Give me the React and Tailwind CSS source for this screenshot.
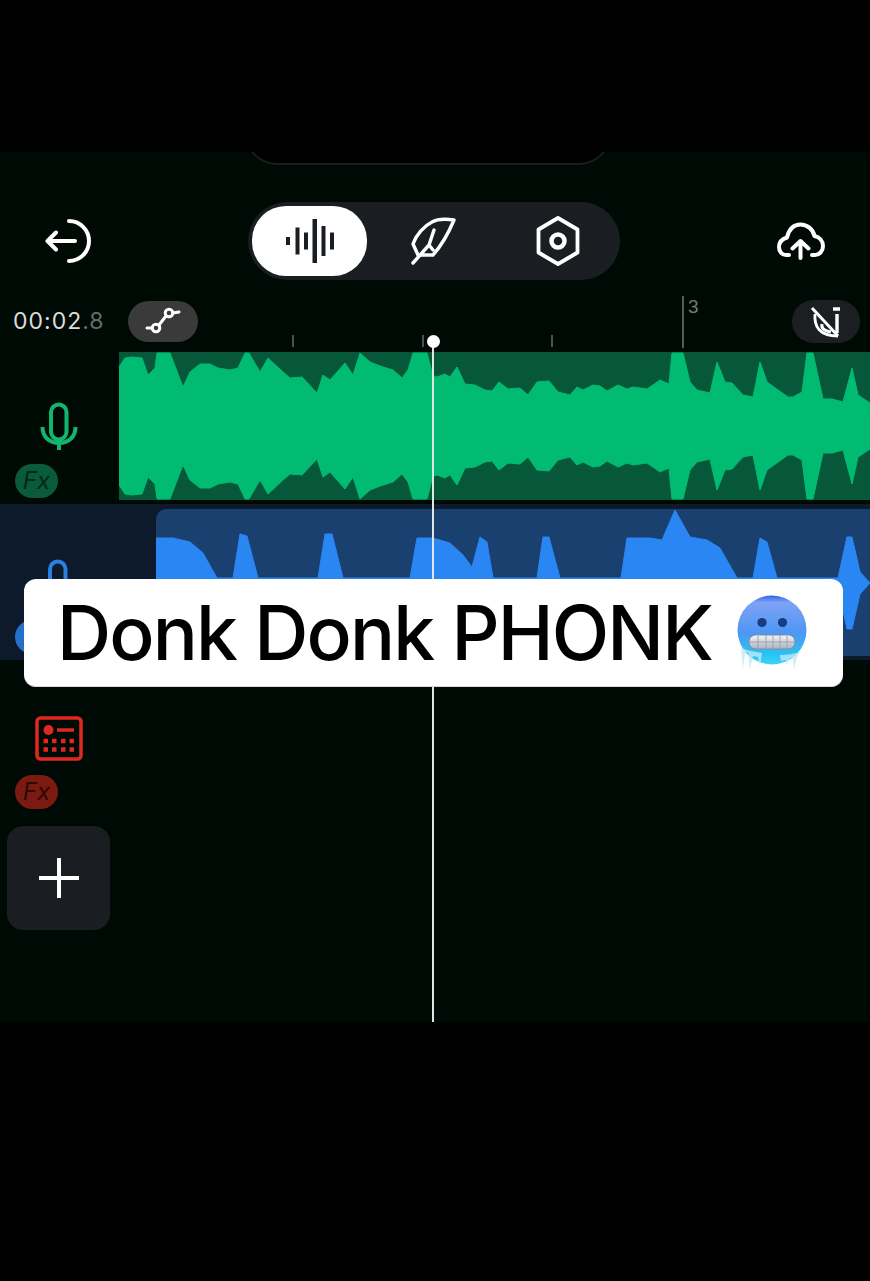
import React from "react";

// upper contour of each clip in page pixels; the lower half is the mirror image
const GREEN_TOP = [
  [119, 367], [125, 358], [132, 357], [142, 358], [148, 375], [155, 368], [157, 353], [170, 353], [183, 387],
  [190, 372], [200, 364], [210, 364], [218, 368], [230, 370], [238, 368], [245, 353], [249, 353], [260, 372],
  [268, 358], [283, 372], [290, 378], [302, 377], [317, 393], [323, 375], [330, 380], [345, 363], [353, 375],
  [360, 353], [370, 362], [380, 366], [393, 370], [402, 378], [408, 370], [413, 353], [427, 353], [433, 376],
  [437, 377], [445, 374], [450, 377], [457, 367], [465, 384], [475, 385], [485, 390], [492, 391], [499, 382],
  [508, 389], [520, 388], [528, 395], [537, 382], [549, 381], [558, 392], [570, 395], [577, 387], [583, 390],
  [593, 385], [600, 386], [607, 391], [618, 385], [627, 389], [633, 387], [647, 389], [660, 380], [669, 384],
  [672, 353], [683, 353], [690, 382], [697, 390], [710, 393], [717, 362], [725, 382], [732, 383], [743, 395],
  [753, 397], [760, 362], [767, 382], [788, 397], [793, 397], [802, 392], [807, 353], [813, 353], [823, 399],
  [832, 399], [843, 402], [852, 368], [858, 395], [870, 403],
];

const BLUE_TOP = [
  [156, 538], [173, 538], [190, 542], [203, 553], [217, 578], [233, 578], [240, 534], [247, 536], [258, 578],
  [318, 578], [325, 534], [332, 534], [343, 578], [410, 578], [417, 538], [433, 538], [450, 543], [463, 555],
  [472, 567], [480, 537], [487, 542], [493, 578], [537, 578], [543, 537], [549, 537], [560, 578], [621, 578],
  [627, 538], [650, 538], [662, 540], [675, 510], [690, 537], [707, 540], [720, 548], [737, 578], [753, 578],
  [760, 538], [767, 542], [777, 578], [838, 578], [847, 537], [852, 537], [860, 572], [870, 583],
];

function mirrored(top, centerY) {
  const upper = top.map(([x, y]) => `${x},${y}`);
  const lower = [...top].reverse().map(([x, y]) => `${x},${2 * centerY - y}`);
  return [...upper, ...lower].join(" ");
}

function Wave({ points, center, fill, x, y, w, h }) {
  return (
    <svg viewBox={`${x} ${y} ${w} ${h}`} className="block w-full h-full">
      <polygon points={mirrored(points, center)} fill={fill} strokeLinejoin="round" stroke={fill} strokeWidth="1" />
    </svg>
  );
}

function Mic({ color }) {
  return (
    <svg width="38" height="50" viewBox="0 0 38 50" fill="none" stroke={color} strokeWidth="4" className="block">
      <rect x="11" y="2.500" width="15.500" height="35" rx="7.750" />
      <path d="M2.500 25c0 10 7 16 16.500 16s16.500-6 16.500-16M19 41v7" />
    </svg>
  );
}

function FxBadge({ bg, color, className = "" }) {
  return (
    <div className={`w-[43px] h-[34px] rounded-[17px] flex items-center justify-center italic text-[24px] leading-none ${bg} ${color} ${className}`}>
      Fx
    </div>
  );
}

function FreezingFace() {
  return (
    <svg width="76" height="76" viewBox="0 0 76 76" className="block shrink-0">
      <defs>
        <linearGradient id="face" x1="0" y1="0" x2="0" y2="1">
          <stop offset="0" stopColor="#2f62ea" />
          <stop offset="0.1" stopColor="#7ea2f6" />
          <stop offset="0.55" stopColor="#4d97f3" />
          <stop offset="0.85" stopColor="#27c4f2" />
          <stop offset="1" stopColor="#3fd4f5" />
        </linearGradient>
        <linearGradient id="teeth" x1="0" y1="0" x2="0" y2="1">
          <stop offset="0" stopColor="#f4f5f7" />
          <stop offset="1" stopColor="#aab2bd" />
        </linearGradient>
      </defs>
      <circle cx="38" cy="35" r="34.500" fill="url(#face)" />
      <circle cx="28" cy="27.500" r="4.600" fill="#173c80" />
      <circle cx="48.500" cy="27.500" r="4.600" fill="#173c80" />
      <rect x="15" y="40" width="46" height="14" rx="6.500" fill="url(#teeth)" stroke="#7e8da3" strokeWidth="1" />
      <path d="M15 47h46M24 41v12M32 40v14M39 40v14M46 40v14M53 41v12" stroke="#9aa3b0" strokeWidth="1" fill="none" />
      <path d="M7 53l2 21 2-15 3-2 2 17 3-13 5 1 2 10 2-14c-8-1-15-3-21-5z" fill="#bfe8f7" opacity="0.8" />
      <path d="M46 60l1 6 5-1v6l4-8 3 1 1 10 3-12 3-5c-6 2-13 3-20 3z" fill="#bfe8f7" opacity="0.8" />
    </svg>
  );
}

export default function App() {
  return (
    <div className="relative w-[870px] h-[1281px] bg-black overflow-hidden font-['Inter',sans-serif]">
      <div className="h-[152px]" />

      <main className="relative h-[870px] bg-[#000a04] overflow-hidden">
        {/* notch edge */}
        <div className="absolute left-[245px] -top-[40px] w-[366px] h-[53px] bg-black border-x-2 border-b-2 border-[#1b1d1c] rounded-b-[32px]" />

        {/* top bar */}
        <header className="flex items-center h-[78px] translate-y-[50px]">
          <div className="w-[248px] pl-[45px]">
            <svg width="46" height="46" viewBox="0 0 46 46" fill="none" stroke="white" strokeWidth="4" strokeLinecap="round" strokeLinejoin="round" className="block">
              <path d="M24 3c11 0 20 9 20 20s-9 20-20 20M3 23h27M11 14.500L2.500 23l8.500 8.500" />
            </svg>
          </div>

          <nav className="w-[372px] h-[78px] rounded-[39px] bg-[#1a1d21] flex items-center pl-[4px]">
            <div className="w-[115px] h-[70px] shrink-0 rounded-[34px] bg-white flex items-center justify-center">
              <svg width="50" height="44" viewBox="0 0 50 44" className="block translate-x-[1px]" fill="#1a1d21">
                <rect x="0" y="18" width="4" height="8" />
                <rect x="9.500" y="8.500" width="4" height="27" />
                <rect x="18" y="13.500" width="4" height="17" />
                <rect x="26.500" y="0" width="4.500" height="44" />
                <rect x="35.500" y="7" width="4" height="30" />
                <rect x="44" y="13.500" width="4" height="17" />
              </svg>
            </div>
            <div className="w-[134px] shrink-0 flex items-center justify-center">
              <svg width="46" height="48" viewBox="0 0 46 48" fill="none" stroke="white" strokeWidth="3.400" strokeLinecap="round" strokeLinejoin="round" className="block">
                <path d="M43 3C36 2 28 1 21 5 13 9 5 18 2 27L7 38H22C30 29 38 15 43 3z" />
                <path d="M2 46L18 28 23 13M18 28l4 5" />
              </svg>
            </div>
            <div className="w-[114px] shrink-0 flex items-center justify-center">
              <svg width="44" height="50" viewBox="0 0 44 50" fill="none" stroke="white" strokeWidth="3.800" strokeLinejoin="round" className="block">
                <path d="M22 2l19.500 11.500v23L22 48 2.500 36.500v-23z" />
                <circle cx="22" cy="25" r="6.500" strokeWidth="4.500" />
              </svg>
            </div>
          </nav>

          <div className="ml-[157px]">
            <svg width="48" height="38" viewBox="0 0 48 38" fill="none" stroke="white" strokeWidth="4" strokeLinecap="round" strokeLinejoin="round" className="block">
              <path d="M12 33H9c-4 0-7-3.500-7-8 0-5 3-8 8-9.500C12 7 17 2.500 23.500 2.500 30 2.500 36 7 37.500 14c5 1 8.500 5 8.500 10 0 5-3.500 9-8 9h-3" />
              <path d="M23.500 36V19M15.500 26.500L23.500 19l8 7.500" />
            </svg>
          </div>
        </header>

        {/* ruler */}
        <div className="relative h-[56px] mt-[66px] flex items-center">
          <div className="pl-[13px] w-[128px] text-[23px] leading-none text-[#dcdcdc] tracking-[1px] -translate-y-[3px]">
            00:02<span className="text-[#6b6b6b]">.8</span>
          </div>
          <div className="w-[70px] h-[41px] rounded-[21px] bg-[#3a3a3a] flex items-center justify-center -translate-y-[3px]">
            <svg width="36" height="28" viewBox="0 0 36 28" fill="none" stroke="white" strokeWidth="3" strokeLinecap="round" className="block">
              <circle cx="11" cy="21" r="3.800" />
              <circle cx="24" cy="6" r="3.800" />
              <path d="M14 18l7-9M7 21H2M28 6l6-1" />
            </svg>
          </div>
          <div className="ml-auto mr-[10px] w-[68px] h-[43px] rounded-[22px] bg-[#1c1f22] flex items-center justify-center -translate-y-[3px]">
            <svg width="32" height="34" viewBox="0 0 32 34" fill="none" stroke="white" strokeWidth="2.800" className="block">
              <path d="M2 4l26 28" strokeWidth="3" />
              <path d="M5 10C4 22 9 32 28 32" />
              <path d="M12 20c-1 4 2 7 9 8" strokeWidth="3" />
              <path d="M23 5h7M27 10v19" strokeWidth="3.400" />
            </svg>
          </div>
          <span className="absolute left-[292px] top-[39px] w-[2px] h-[12px] bg-[#4f4f4f]" />
          <span className="absolute left-[422px] top-[39px] w-[2px] h-[12px] bg-[#4f4f4f]" />
          <span className="absolute left-[551px] top-[39px] w-[2px] h-[12px] bg-[#4f4f4f]" />
          <span className="absolute left-[682px] top-0 w-[2px] h-[52px] bg-[#5a5a5a]" />
          <span className="absolute left-[688px] top-0 text-[19px] leading-[22px] text-[#787878] font-['Liberation_Sans',sans-serif]">3</span>
        </div>

        {/* track 1 */}
        <section className="flex h-[148px]">
          <div className="w-[119px] shrink-0 relative flex flex-col items-center pt-[50px] pr-[2px]">
            <Mic color="#12b56e" />
            <FxBadge bg="bg-[#0a5a3d]" color="text-[#02291a]" className="absolute left-[15px] top-[112px]" />
          </div>
          <div className="flex-1 bg-[#07583a]">
            <Wave points={GREEN_TOP} center={426} fill="#02bb72" x={119} y={352} w={751} h={148} />
          </div>
        </section>

        {/* track 2 */}
        <section className="flex h-[156px] mt-[4px] bg-[#0c1a2c]">
          <div className="w-[156px] shrink-0 relative pt-[55px] pl-[39px]">
            <Mic color="#2a7fe0" />
            <FxBadge bg="bg-[#2470c8]" color="text-[#0c2a50]" className="absolute left-[15px] top-[116px]" />
          </div>
          <div className="flex-1 mt-[5px] mb-[4px] rounded-tl-[10px] overflow-hidden bg-[#1a4070]">
            <Wave points={BLUE_TOP} center={583} fill="#2a86f3" x={156} y={509} w={714} h={147} />
          </div>
        </section>

        {/* track 3 */}
        <section className="w-[119px] pt-[56px]">
          <svg width="48" height="46" viewBox="0 0 48 46" fill="none" className="block ml-[35px]">
            <rect x="2" y="2" width="44" height="41" rx="3.500" stroke="#e0281e" strokeWidth="3.500" />
            <circle cx="13.500" cy="14" r="5" fill="#e0281e" />
            <path d="M22 14h17" stroke="#e0281e" strokeWidth="3.500" />
            <path d="M8.500 25h4.500M17 25h4.500M26 25h4.500M34.500 25h4.500M8.500 33.500h4.500M17 33.500h4.500M26 33.500h4.500M34.500 33.500h4.500" stroke="#e0281e" strokeWidth="4.500" />
          </svg>
          <FxBadge bg="bg-[#7a1a10]" color="text-[#2e0a06]" className="mt-[13px] ml-[15px]" />
          <button className="mt-[17px] ml-[7px] w-[103px] h-[104px] rounded-[16px] bg-[#1a1d21] flex items-center justify-center">
            <svg width="42" height="42" viewBox="0 0 42 42" stroke="white" strokeWidth="4" className="block">
              <path d="M21 1v40M1 21h40" />
            </svg>
          </button>
        </section>

        {/* playhead */}
        <div className="absolute left-[432px] top-[190px] bottom-0 w-[2px] bg-[#dfe5e2]" />
        <div className="absolute left-[427px] top-[183px] w-[13px] h-[13px] rounded-full bg-white" />

        {/* title caption */}
        <div className="absolute left-[24px] top-[427px] w-[819px] h-[108px] rounded-[12px] bg-white border-b border-[#d8d8d8] flex items-center pl-[33px] pr-[33px] justify-between">
          <span className="text-[75px] leading-none text-black font-[550] tracking-[-1.850px] whitespace-nowrap">Donk Donk PHONK</span>
          <FreezingFace />
        </div>
      </main>
    </div>
  );
}
